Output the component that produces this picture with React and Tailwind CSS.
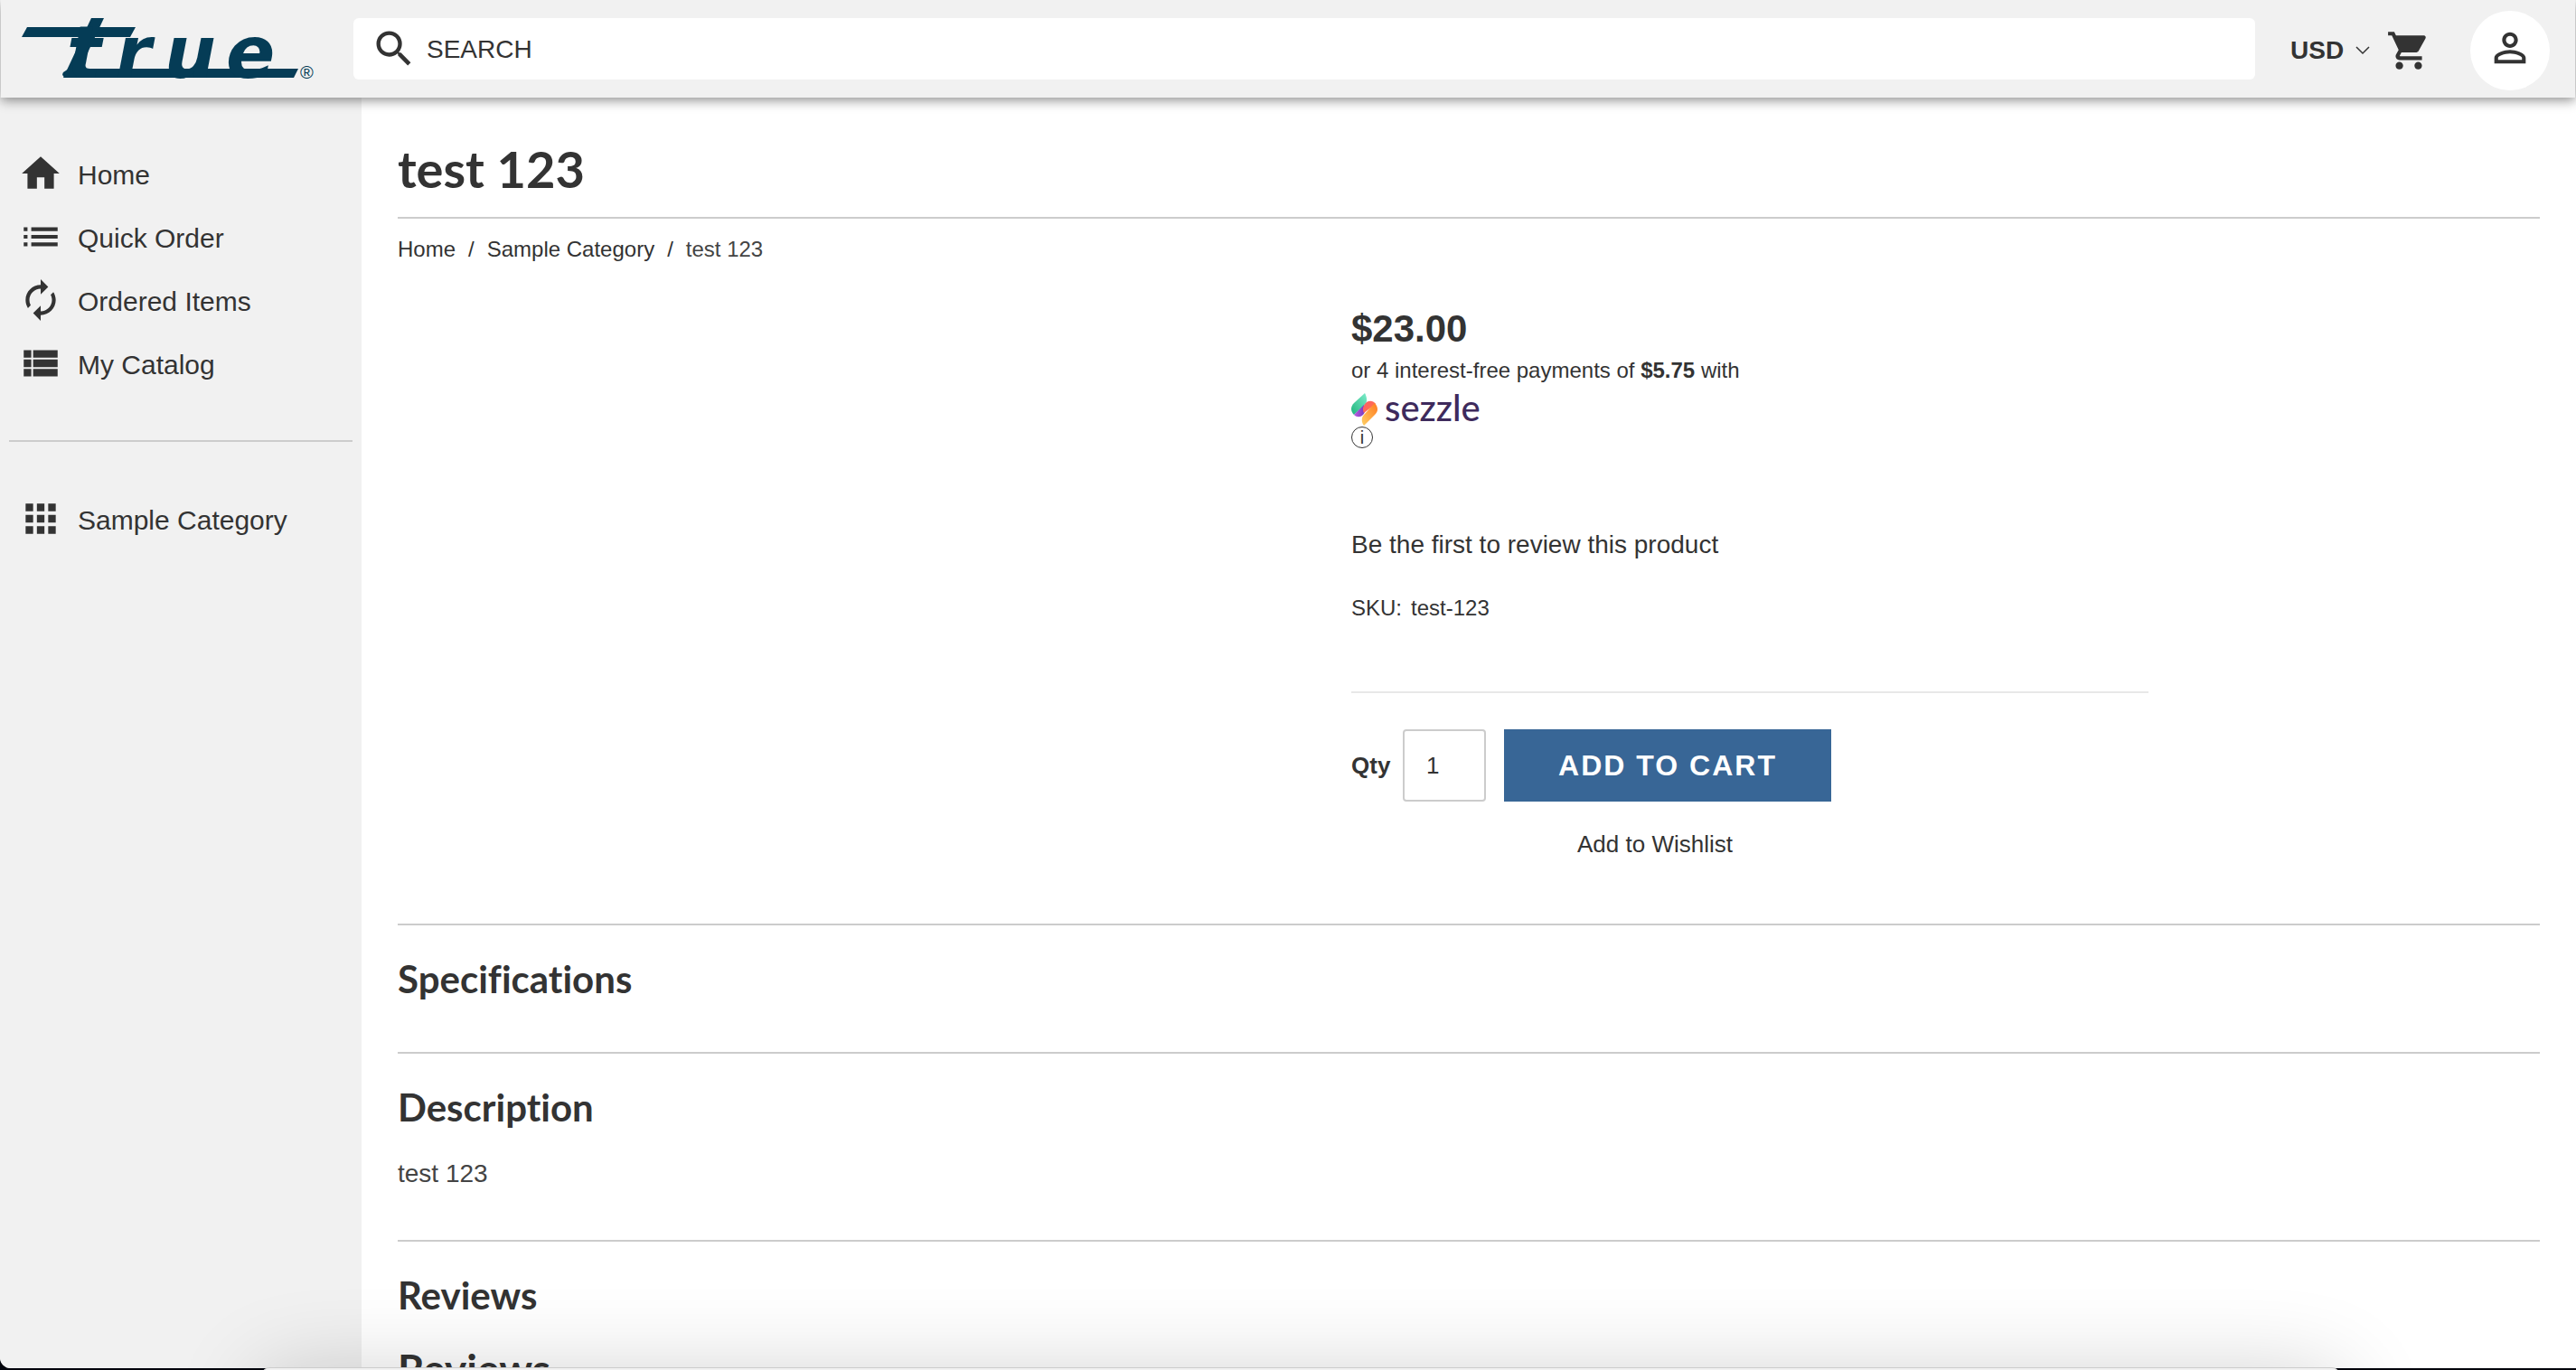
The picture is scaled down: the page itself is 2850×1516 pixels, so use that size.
import React from "react";
import {
  MdSearch,
  MdShoppingCart,
  MdPersonOutline,
  MdHome,
  MdList,
  MdAutorenew,
  MdViewList,
  MdApps,
} from "react-icons/md";

const navItems = [
  { label: "Home", Icon: MdHome },
  { label: "Quick Order", Icon: MdList },
  { label: "Ordered Items", Icon: MdAutorenew },
  { label: "My Catalog", Icon: MdViewList },
];

function Logo() {
  return (
    <svg
      width="326"
      height="68"
      viewBox="0 0 326 68"
      role="img"
      aria-label="true"
      className="block overflow-visible fill-[#053c56]"
    >
      <path d="M6 10H126L120 21H0Z" />
      <path d="M52 56H306L301 66H50C46 66 44 63 46 60Z" />
      <path d="M77 0H91L60 66H46Z" />
      <text
        x="50 104 158 226"
        y="66"
        className="text-[80px] font-bold italic [font-family:'DejaVu_Sans',sans-serif]"
      >
        true
      </text>
      <text x="308" y="67" className="text-[20px] [font-family:'Liberation_Sans',sans-serif]">
        ®
      </text>
    </svg>
  );
}

function SezzleMark() {
  return (
    <svg width="29" height="36" viewBox="0 0 29 36" aria-hidden="true">
      <defs>
        <linearGradient id="sz-green" x1="1" y1="0" x2="0" y2="1">
          <stop offset="0" stopColor="#7eeccb" />
          <stop offset="1" stopColor="#1fb57c" />
        </linearGradient>
        <linearGradient id="sz-purple" x1="0" y1="0" x2="1" y2="0">
          <stop offset="0" stopColor="#c05be0" />
          <stop offset="1" stopColor="#6b3bc0" />
        </linearGradient>
        <linearGradient id="sz-red" x1="0" y1="0" x2="1" y2="1">
          <stop offset="0" stopColor="#ff5a6e" />
          <stop offset="1" stopColor="#ff7a3c" />
        </linearGradient>
        <linearGradient id="sz-orange" x1="1" y1="0" x2="0" y2="1">
          <stop offset="0" stopColor="#ff7a1f" />
          <stop offset="1" stopColor="#ffd064" />
        </linearGradient>
      </defs>
      <path d="M15 0C17 4 18 8 16 12L3 24C-1 20-1 15 3 11Z" fill="url(#sz-green)" />
      <path d="M3 24L14 13C16 17 16 21 13 24C10 27 6 27 3 24Z" fill="url(#sz-purple)" />
      <path d="M14 22C12 18 13 14 16 11C19 8 24 8 27 12Z" fill="url(#sz-red)" />
      <path d="M14 36C11 32 11 27 14 24L26 11C30 16 30 20 26 24Z" fill="url(#sz-orange)" />
    </svg>
  );
}

function NavLink({ label, Icon }) {
  return (
    <li>
      <a href="#" className="flex h-[70px] items-center gap-4 pl-5 text-[30px] leading-10">
        <Icon size={50} aria-hidden="true" />
        <span className="pt-1">{label}</span>
      </a>
    </li>
  );
}

function Header() {
  return (
    <header className="relative z-10 mx-px flex h-[108px] shrink-0 items-center bg-[#f1f1f1] shadow-[0_3px_12px_rgba(0,0,0,0.45)]">
      <a href="#" className="w-[390px] shrink-0 pl-[23px]">
        <Logo />
      </a>
      <label className="flex h-[68px] grow items-center gap-2.5 rounded-md bg-white pl-[19px]">
        <MdSearch size={52} aria-hidden="true" />
        <input
          type="text"
          aria-label="Search"
          placeholder="SEARCH"
          className="h-full grow pt-0.5 text-[28px] outline-none placeholder:text-[#333] placeholder:opacity-100"
        />
      </label>
      <div className="flex items-center pt-1 pr-7 pl-[39px]">
        <div className="relative flex items-center">
          <select
            aria-label="Currency"
            defaultValue="USD"
            className="appearance-none bg-transparent pr-7 text-[28px] leading-10 font-bold"
          >
            <option>USD</option>
          </select>
          <svg
            width="16"
            height="10"
            viewBox="0 0 16 10"
            fill="none"
            stroke="#333"
            strokeWidth="1.5"
            aria-hidden="true"
            className="pointer-events-none absolute right-0"
          >
            <path d="M1 1L8 8L15 1" />
          </svg>
        </div>
        <button type="button" aria-label="Cart" className="ml-[18px]">
          <MdShoppingCart size={50} />
        </button>
        <button
          type="button"
          aria-label="Account"
          className="ml-[43px] flex size-[88px] items-center justify-center rounded-full bg-white pb-1.5"
        >
          <MdPersonOutline size={52} />
        </button>
      </div>
    </header>
  );
}

function Sidebar() {
  return (
    <nav className="w-[400px] shrink-0 bg-[#f1f1f1] pt-[49px]">
      <ul>
        {navItems.map((item) => (
          <NavLink key={item.label} {...item} />
        ))}
      </ul>
      <hr className="mx-2.5 my-[50px] border-t-2 border-[#ccc]" />
      <ul>
        <NavLink label="Sample Category" Icon={MdApps} />
      </ul>
    </nav>
  );
}

function ProductInfo() {
  return (
    <div className="col-start-2">
      <p className="text-[42px] leading-[48px] font-bold">$23.00</p>
      <p className="mt-1 text-[24px] leading-9">
        or 4 interest-free payments of <b>$5.75</b> with
      </p>
      <div className="mt-[7px] flex h-9 items-center gap-2 text-[40px] leading-8 font-medium text-[#3e2a5c] [font-family:Lato,sans-serif]">
        <SezzleMark />
        <span className="pb-1">sezzle</span>
      </div>
      <button
        type="button"
        aria-label="Sezzle information"
        className="mt-px flex size-6 items-center justify-center rounded-full border border-[#333] text-[20px] leading-5"
      >
        i
      </button>
      <p className="mt-[87px] text-[28px] leading-10">
        <a href="#">Be the first to review this product</a>
      </p>
      <p className="mt-[34px] flex gap-2.5 text-[24px] leading-8">
        <span>SKU:</span>
        <span>test-123</span>
      </p>
      <hr className="mt-[76px] border-t-2 border-[#e8e8e8]" />
      <form className="mt-10 flex h-20 items-center" onSubmit={(e) => e.preventDefault()}>
        <label htmlFor="qty" className="w-[57px] text-[26px] font-bold">
          Qty
        </label>
        <input
          id="qty"
          type="text"
          defaultValue="1"
          className="h-full w-[92px] rounded border-2 border-[#ccc] pl-6 text-[26px] outline-none"
        />
        <button
          type="submit"
          className="ml-5 h-full w-[362px] bg-[#386696] text-[32px] font-bold tracking-[2px] text-white"
        >
          ADD TO CART
        </button>
      </form>
      <a href="#" className="mt-[27px] ml-[250px] block text-[26px] leading-10">
        Add to Wishlist
      </a>
    </div>
  );
}

function Section({ title, children }) {
  return (
    <section className="border-t-2 border-[#ccc] pt-[31px] pb-[53px]">
      <h2 className="text-[42px] leading-[56px] font-bold [font-family:Lato,sans-serif] [font-variant-ligatures:none]">
        {title}
      </h2>
      {children}
    </section>
  );
}

export default function App() {
  return (
    <div className="relative h-screen overflow-hidden bg-[#02040c] pb-0.5 text-[#333] [font-family:'Liberation_Sans',Arial,sans-serif]">
      <div className="flex h-full flex-col overflow-hidden rounded-bl-xl bg-white">
        <Header />
        <div className="flex min-h-0 grow">
          <Sidebar />
          <main className="grow px-10 pt-[43px]">
            <h1 className="border-b-2 border-[#ccc] pb-[17px] text-[56px] leading-[72px] font-bold [font-family:Lato,sans-serif]">
              test 123
            </h1>
            <nav aria-label="Breadcrumb" className="mt-[18px] flex gap-3.5 text-[24px] leading-8">
              <a href="#">Home</a>
              <span>/</span>
              <a href="#">Sample Category</a>
              <span>/</span>
              <span className="text-[#444]">test 123</span>
            </nav>
            <div className="mt-12 mb-[68px] grid grid-cols-[1055fr_882fr_433fr]">
              <ProductInfo />
            </div>
            <Section title="Specifications" />
            <Section title="Description">
              <p className="mt-[26px] text-[28px] leading-10 text-[#444]">test 123</p>
            </Section>
            <Section title="Reviews">
              <h3 className="mt-[26px] text-[46px] leading-[56px] font-bold [font-family:Lato,sans-serif]">
                Reviews
              </h3>
            </Section>
          </main>
        </div>
      </div>
      {/* window peeking in from the bottom edge */}
      <div className="absolute top-full right-[262px] left-[290px] z-20 -mt-[3px] h-60 rounded-t-lg border-t border-[#ccc] bg-[#f1f1f1] shadow-[0_10px_100px_rgba(0,0,0,0.2)]" />
    </div>
  );
}
